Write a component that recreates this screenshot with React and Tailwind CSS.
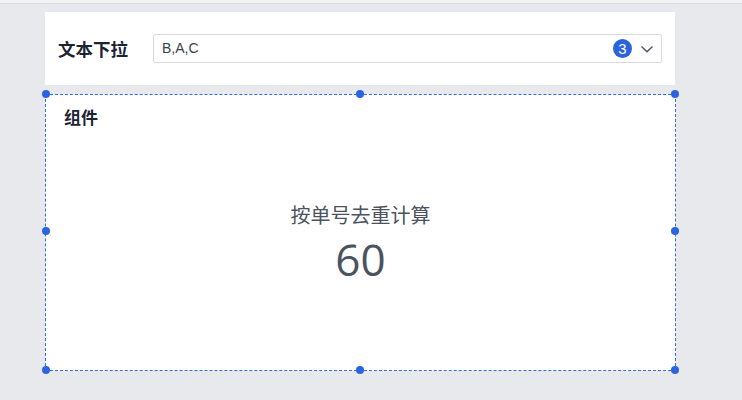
import React from "react";

function Handle({ className }) {
  return <span className={`absolute w-[8px] h-[8px] rounded-full bg-[#2b63e0] ${className}`} />;
}

export default function App() {
  return (
    <div
      className="w-[742px] h-[400px] bg-[#e8e9ed] overflow-hidden flex flex-col"
      style={{ fontFamily: '"Noto Sans CJK SC", "Noto Sans", sans-serif' }}
    >
      <div className="h-[4px] bg-[#f1f2f4] border-b border-[#dadbdf]" />
      <div className="pl-[45px] pt-[8px] flex flex-col">
        <div className="w-[630px] h-[73px] bg-white flex items-center pl-[13px] pr-[13px]">
          <div className="w-[95px] text-[17.5px] font-bold text-[#1c2433] leading-none">文本下拉</div>
          <div className="flex-1 h-[29px] border border-[#d8dadf] rounded-[2px] flex items-center pl-[8px] pr-[7px]">
            <span className="flex-1 text-[14px] text-[#3a3f48]" style={{ fontFamily: '"Liberation Sans", sans-serif' }}>B,A,C</span>
            <span className="w-[19px] h-[19px] rounded-full bg-[#2b63dc] text-white text-[15px] flex items-center justify-center leading-none" style={{ fontFamily: '"Liberation Sans", sans-serif' }}>3</span>
            <svg className="ml-[8px]" width="14" height="14" viewBox="0 0 14 14" fill="none">
              <path d="M1.5 4.5 L7 9.8 L12.5 4.5" stroke="#4b5563" strokeWidth="1.4" />
            </svg>
          </div>
        </div>
        <div className="relative mt-[9px] w-[631px] h-[277px] bg-white border border-dashed border-[#2f6bea]">
          <Handle className="-left-[4px] -top-[5px]" />
          <Handle className="left-[310px] -top-[5px]" />
          <Handle className="-right-[4px] -top-[5px]" />
          <Handle className="-left-[4px] top-[132px]" />
          <Handle className="-right-[4px] top-[132px]" />
          <Handle className="-left-[4px] -bottom-[4px]" />
          <Handle className="left-[310px] -bottom-[4px]" />
          <Handle className="-right-[4px] -bottom-[4px]" />
          <div className="pl-[18px] pt-[11px] text-[17px] font-bold text-[#1c2433] leading-[22px]">组件</div>
          <div className="flex flex-col items-center mt-[74px]">
            <div className="text-[20px] text-[#4b5260] leading-[26px]">按单号去重计算</div>
            <div className="text-[44px] text-[#4b5260] leading-[50px] mt-[6px]" style={{ fontFamily: '"Open Sans", "Noto Sans", sans-serif' }}>60</div>
          </div>
        </div>
      </div>
    </div>
  );
}
